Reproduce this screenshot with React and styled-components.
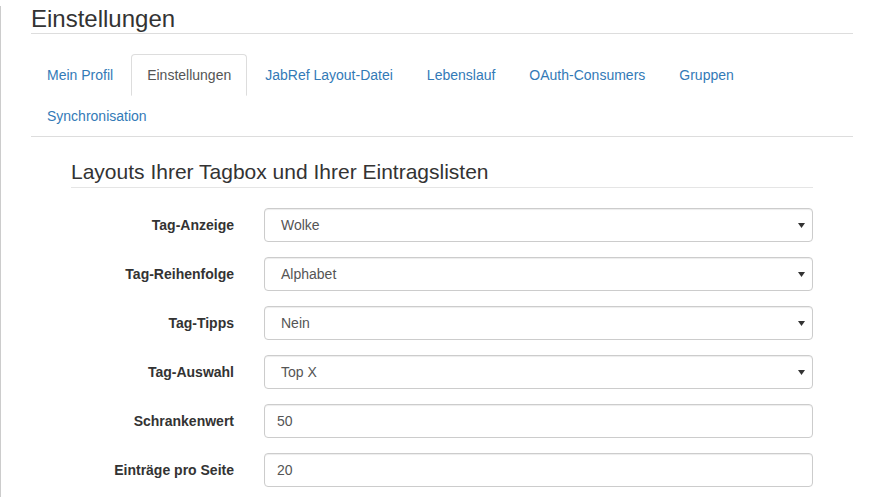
import React from "react";
import styled, { createGlobalStyle } from "styled-components";

const GlobalStyle = createGlobalStyle`
  html, body {
    margin: 0;
    padding: 0;
    background: #fff;
  }
  body {
    font-family: "Liberation Sans", Arial, sans-serif;
    font-size: 14px;
    line-height: 1.42857;
    color: #333;
  }
  * {
    box-sizing: border-box;
  }
`;

const Page = styled.div`
  min-height: 100vh;
  border-left: 1px solid #ccc;
  padding: 0 29px 40px 30px;
  width: 883px;
`;

const Content = styled.div`
  width: 822px;
`;

const Title = styled.h1`
  margin: 6px 0 0;
  padding-bottom: 1px;
  font-size: 24px;
  font-weight: 400;
  line-height: 1.1;
  color: #333;
  border-bottom: 1px solid #ddd;
`;

const Tabs = styled.ul`
  display: flex;
  flex-wrap: wrap;
  list-style: none;
  margin: 20px 0 0;
  padding: 0;
  border-bottom: 1px solid #ddd;
`;

const Tab = styled.li`
  margin: 0 2px -1px 0;
`;

const TabLink = styled.a`
  display: block;
  padding: 10px 15px;
  line-height: 20px;
  border: 1px solid ${(p) => (p.$active ? "#ddd" : "transparent")};
  border-bottom-color: ${(p) => (p.$active ? "#fff" : "transparent")};
  border-radius: 4px 4px 0 0;
  background: ${(p) => (p.$active ? "#fff" : "transparent")};
  color: ${(p) => (p.$active ? "#555" : "#337ab7")};
  text-decoration: none;
  cursor: ${(p) => (p.$active ? "default" : "pointer")};
`;

const Form = styled.form`
  margin: 20px 40px 0;
`;

const Legend = styled.div`
  font-size: 21px;
  line-height: 30px;
  color: #333;
  border-bottom: 1px solid #e5e5e5;
  margin-bottom: 20px;
`;

const Group = styled.div`
  display: grid;
  grid-template-columns: 163px 1fr;
  column-gap: 30px;
  margin-bottom: 15px;
`;

const Label = styled.label`
  padding-top: 7px;
  text-align: right;
  font-weight: 700;
  line-height: 20px;
`;

const Control = styled.div`
  display: flex;
  align-items: center;
  justify-content: space-between;
  height: 34px;
  padding: 6px 7px 6px ${(p) => (p.$select ? "16px" : "12px")};
  font-size: 14px;
  line-height: 20px;
  color: #555;
  background: #fff;
  border: 1px solid #ccc;
  border-radius: 4px;
  box-shadow: inset 0 1px 1px rgba(0, 0, 0, 0.075);
`;

const Caret = () => (
  <svg width="7" height="5" viewBox="0 0 7 5">
    <path d="M0 0 H7 L3.5 5 Z" fill="#333" />
  </svg>
);

const tabs = [
  "Mein Profil",
  "Einstellungen",
  "JabRef Layout-Datei",
  "Lebenslauf",
  "OAuth-Consumers",
  "Gruppen",
  "Synchronisation",
];

const fields = [
  { label: "Tag-Anzeige", value: "Wolke", select: true },
  { label: "Tag-Reihenfolge", value: "Alphabet", select: true },
  { label: "Tag-Tipps", value: "Nein", select: true },
  { label: "Tag-Auswahl", value: "Top X", select: true },
  { label: "Schrankenwert", value: "50" },
  { label: "Einträge pro Seite", value: "20" },
];

export default function App() {
  return (
    <>
      <GlobalStyle />
      <Page>
        <Content>
          <Title>Einstellungen</Title>
          <Tabs>
            {tabs.map((t) => (
              <Tab key={t}>
                <TabLink $active={t === "Einstellungen"}>{t}</TabLink>
              </Tab>
            ))}
          </Tabs>
          <Form>
            <Legend>Layouts Ihrer Tagbox und Ihrer Eintragslisten</Legend>
            {fields.map((f) => (
              <Group key={f.label}>
                <Label>{f.label}</Label>
                <Control $select={f.select}>
                  <span>{f.value}</span>
                  {f.select && <Caret />}
                </Control>
              </Group>
            ))}
          </Form>
        </Content>
      </Page>
    </>
  );
}
